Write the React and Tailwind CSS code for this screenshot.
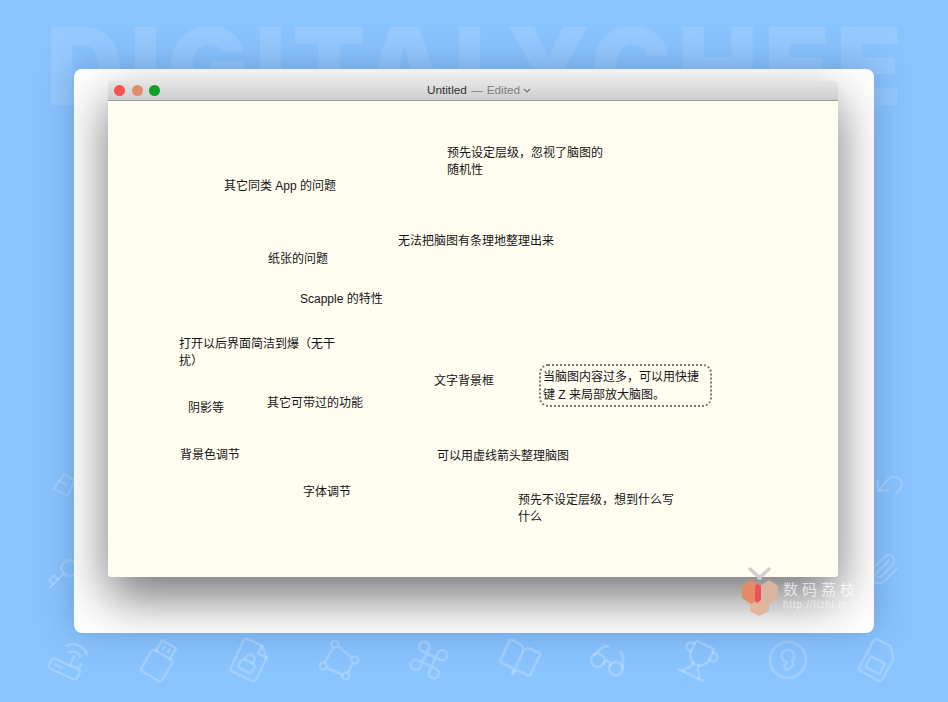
import React from 'react';
import { BookOpen, Command, Glasses, Key, Paperclip, Trophy, Undo2 } from 'lucide-react';

const FONT = "font-['Liberation_Sans','Noto_Sans_CJK_SC',sans-serif]";

// Notes sit on a free canvas, so each one keeps its own place
const notes = [
  { text: '预先设定层级，忽视了脑图的\n随机性', place: 'left-[339px] top-[44px] w-[170px]' },
  { text: '其它同类 App 的问题', place: 'left-[116px] top-[77px]' },
  { text: '无法把脑图有条理地整理出来', place: 'left-[290px] top-[132px]' },
  { text: '纸张的问题', place: 'left-[160px] top-[150px]' },
  { text: 'Scapple 的特性', place: 'left-[192px] top-[190px]' },
  { text: '打开以后界面简洁到爆（无干\n扰）', place: 'left-[71px] top-[235px] w-[170px]' },
  { text: '文字背景框', place: 'left-[326px] top-[272px]' },
  { text: '其它可带过的功能', place: 'left-[159px] top-[294px]' },
  { text: '阴影等', place: 'left-[80px] top-[299px]' },
  { text: '背景色调节', place: 'left-[72px] top-[346px]' },
  { text: '可以用虚线箭头整理脑图', place: 'left-[329px] top-[347px]' },
  { text: '字体调节', place: 'left-[195px] top-[383px]' },
  { text: '预先不设定层级，想到什么写\n什么', place: 'left-[410px] top-[391px] w-[170px]' },
];

const RouterIcon = () => (
  <svg viewBox="0 0 40 40" className="w-10 h-10 rotate-[24deg]" fill="none" stroke="currentColor" strokeWidth="2.600" strokeLinecap="round" strokeLinejoin="round">
    <rect x="3" y="25" width="31" height="11" rx="3" />
    <path d="M8 30.500h7M22 25V15" />
    <path d="M16 13a8 8 0 0 1 12 0M11 8a15 15 0 0 1 22 0" />
    <path d="M31 24a8 8 0 0 0 1-5" />
  </svg>
);

const UsbIcon = () => (
  <svg viewBox="0 0 40 40" className="w-10 h-10 rotate-[30deg]" fill="none" stroke="currentColor" strokeWidth="2.600" strokeLinecap="round" strokeLinejoin="round">
    <rect x="8" y="14" width="24" height="25" rx="3" />
    <path d="M12 14V2h16v12" />
    <path d="M17 6v3M23 6v3" />
  </svg>
);

const LockFileIcon = () => (
  <svg viewBox="0 0 40 40" className="w-10 h-10 rotate-[25deg]" fill="none" stroke="currentColor" strokeWidth="2.600" strokeLinecap="round" strokeLinejoin="round">
    <path d="M9 2h16l9 9v24a3 3 0 0 1-3 3H9a3 3 0 0 1-3-3V5a3 3 0 0 1 3-3z" />
    <path d="M25 2v9h9" />
    <rect x="12" y="22" width="15" height="10" rx="3" />
    <path d="M15 22v-3a4.500 4.500 0 0 1 9 0v3" />
  </svg>
);

const BezierIcon = () => (
  <svg viewBox="0 0 40 40" className="w-10 h-10" fill="none" stroke="currentColor" strokeWidth="2.600">
    <circle cx="16" cy="4" r="3.500" />
    <circle cx="36" cy="20" r="3.500" />
    <circle cx="27" cy="36" r="3.500" />
    <circle cx="4" cy="26" r="3.500" />
    <path d="M19 6l14 12M34 23l-5.500 10M24 35L7 27.500M5.500 23L14.500 7" />
  </svg>
);

const KeyholeIcon = () => (
  <svg viewBox="0 0 40 40" className="w-10 h-10" fill="none" stroke="currentColor" strokeWidth="2.600" strokeLinejoin="round">
    <circle cx="20" cy="20" r="18" />
    <path d="M20 10a6 6 0 0 1 4 10.500l2 4.500-7 5-3-3 3-5a6 6 0 0 1 1-12z" />
  </svg>
);

const MemoryCardIcon = () => (
  <svg viewBox="0 0 40 40" className="w-10 h-10 rotate-[28deg]" fill="none" stroke="currentColor" strokeWidth="2.600" strokeLinejoin="round">
    <path d="M11 2h14l8 10v23a3 3 0 0 1-3 3H10a3 3 0 0 1-3-3V6a4 4 0 0 1 4-4z" />
    <rect x="12" y="20" width="16" height="12" />
  </svg>
);

const CatchIcon = () => (
  <svg viewBox="0 0 40 40" className="w-full h-full" fill="none" stroke="currentColor" strokeWidth="2.600" strokeLinecap="round" strokeLinejoin="round">
    <path d="M20 3l15 9-10 22-20-10z" />
    <path d="M12 12l12 7" />
  </svg>
);

const BottomIcons = () => (
  <div className="flex justify-between px-[50px] text-white/20 mt-[7px]">
    <RouterIcon />
    <UsbIcon />
    <LockFileIcon />
    <BezierIcon />
    <Command size={40} strokeWidth={1.6} className="rotate-[25deg]" />
    <BookOpen size={40} strokeWidth={1.6} className="rotate-[25deg]" />
    <Glasses size={40} strokeWidth={1.6} className="rotate-[25deg]" />
    <Trophy size={40} strokeWidth={1.6} className="rotate-[25deg]" />
    <KeyholeIcon />
    <MemoryCardIcon />
  </div>
);

const Watermark = () => (
  <div className="absolute left-[740px] top-[566px] flex items-start gap-[3px]">
    <svg viewBox="0 0 40 50" className="w-10 h-[50px] shrink-0">
      <path d="M10 3l10 9" stroke="#cfcfcf" strokeWidth="3.500" strokeLinecap="round" />
      <path d="M29 3l-10 9" stroke="#cfcfcf" strokeWidth="3.500" strokeLinecap="round" />
      <path d="M29 14l9 6v12l-9 6-9-6V20z" fill="#d9b5a0" />
      <path d="M19 32l10 6v7l-10 5-9-5V38z" fill="#e3b49c" />
      <path d="M11 14l10 6v12l-10 6-9-6V20z" fill="#e58a67" />
      <path d="M17 18l4 2v14l-4 3-2-2V20z" fill="#f0505a" />
    </svg>
    <div className={`${FONT} pt-[15px] text-white/70`}>
      <div className="text-[15px] leading-[18px] tracking-[4px] whitespace-nowrap">数码荔枝</div>
      <div className="text-[10px] leading-[12px] tracking-[0.8px] text-white/55">http://lizhi.io</div>
    </div>
  </div>
);

const Window = () => (
  <div className="w-[730px] h-[496px] flex flex-col rounded-[4px] overflow-hidden shadow-[0_20px_50px_rgba(0,0,0,0.55)]">
    <div className="relative h-5 shrink-0 flex items-center justify-center bg-gradient-to-b from-[#e6e6e6] to-[#cdcdcd] border-b border-[#9c9c9c]">
      <div className="absolute left-[6px] top-[4px] flex gap-[6.500px]">
        <span className="w-[11px] h-[11px] rounded-full bg-[#f9524f]" />
        <span className="w-[11px] h-[11px] rounded-full bg-[#e28d69]" />
        <span className="w-[11px] h-[11px] rounded-full bg-[#0fa02b]" />
      </div>
      <div className={`${FONT} flex items-center ml-[12px] text-[11.800px] leading-none text-[#333]`}>
        <span>Untitled</span>
        <span className="text-[#808080] ml-1">—</span>
        <span className="text-[#808080] ml-1">Edited</span>
        <svg viewBox="0 0 8 5" className="w-2 h-[5px] ml-[3px]" fill="none" stroke="#777" strokeWidth="1.200">
          <path d="M1 1l3 3 3-3" />
        </svg>
      </div>
    </div>
    <div className={`${FONT} relative flex-1 bg-[#fffdf0] text-[12px] leading-[17px] text-[#151515]`}>
      {notes.map((note) => (
        <div key={note.text} className={`absolute whitespace-pre-line ${note.place}`}>{note.text}</div>
      ))}
      <div className="absolute left-[431px] top-[263px] w-[173px] h-[43px] pl-[2px] pt-[2px] border-2 border-dotted border-[#777] rounded-[9px] whitespace-pre-line leading-[18px]">
        {'当脑图内容过多，可以用快捷\n键 Z 来局部放大脑图。'}
      </div>
    </div>
  </div>
);

export default function App() {
  return (
    <div className="relative w-[948px] h-[702px] overflow-hidden bg-[#8ac4ff] pt-[69px]">
      <div className="absolute left-[46px] top-[-1px] font-['Inter',sans-serif] font-black text-[107px] leading-[134px] tracking-[6.500px] whitespace-nowrap text-white/10">
        DIGITALYCHEE
      </div>
      <div className="absolute left-[50px] top-[470px] w-7 h-8 text-white/20"><CatchIcon /></div>
      <Key size={34} strokeWidth={1.6} className="absolute left-[46px] top-[556px] text-white/20 rotate-[180deg]" />
      <Undo2 size={34} strokeWidth={1.6} className="absolute left-[872px] top-[468px] text-white/20 rotate-[-50deg]" />
      <Paperclip size={34} strokeWidth={1.6} className="absolute left-[866px] top-[552px] text-white/20" />

      <div className="relative w-[800px] h-[564px] ml-[74px] pt-3 pl-[34px] bg-white rounded-[8px] overflow-hidden shadow-[0_-2px_36px_rgba(30,60,110,0.3)]">
        <Window />
      </div>
      <BottomIcons />
      <Watermark />
    </div>
  );
}
